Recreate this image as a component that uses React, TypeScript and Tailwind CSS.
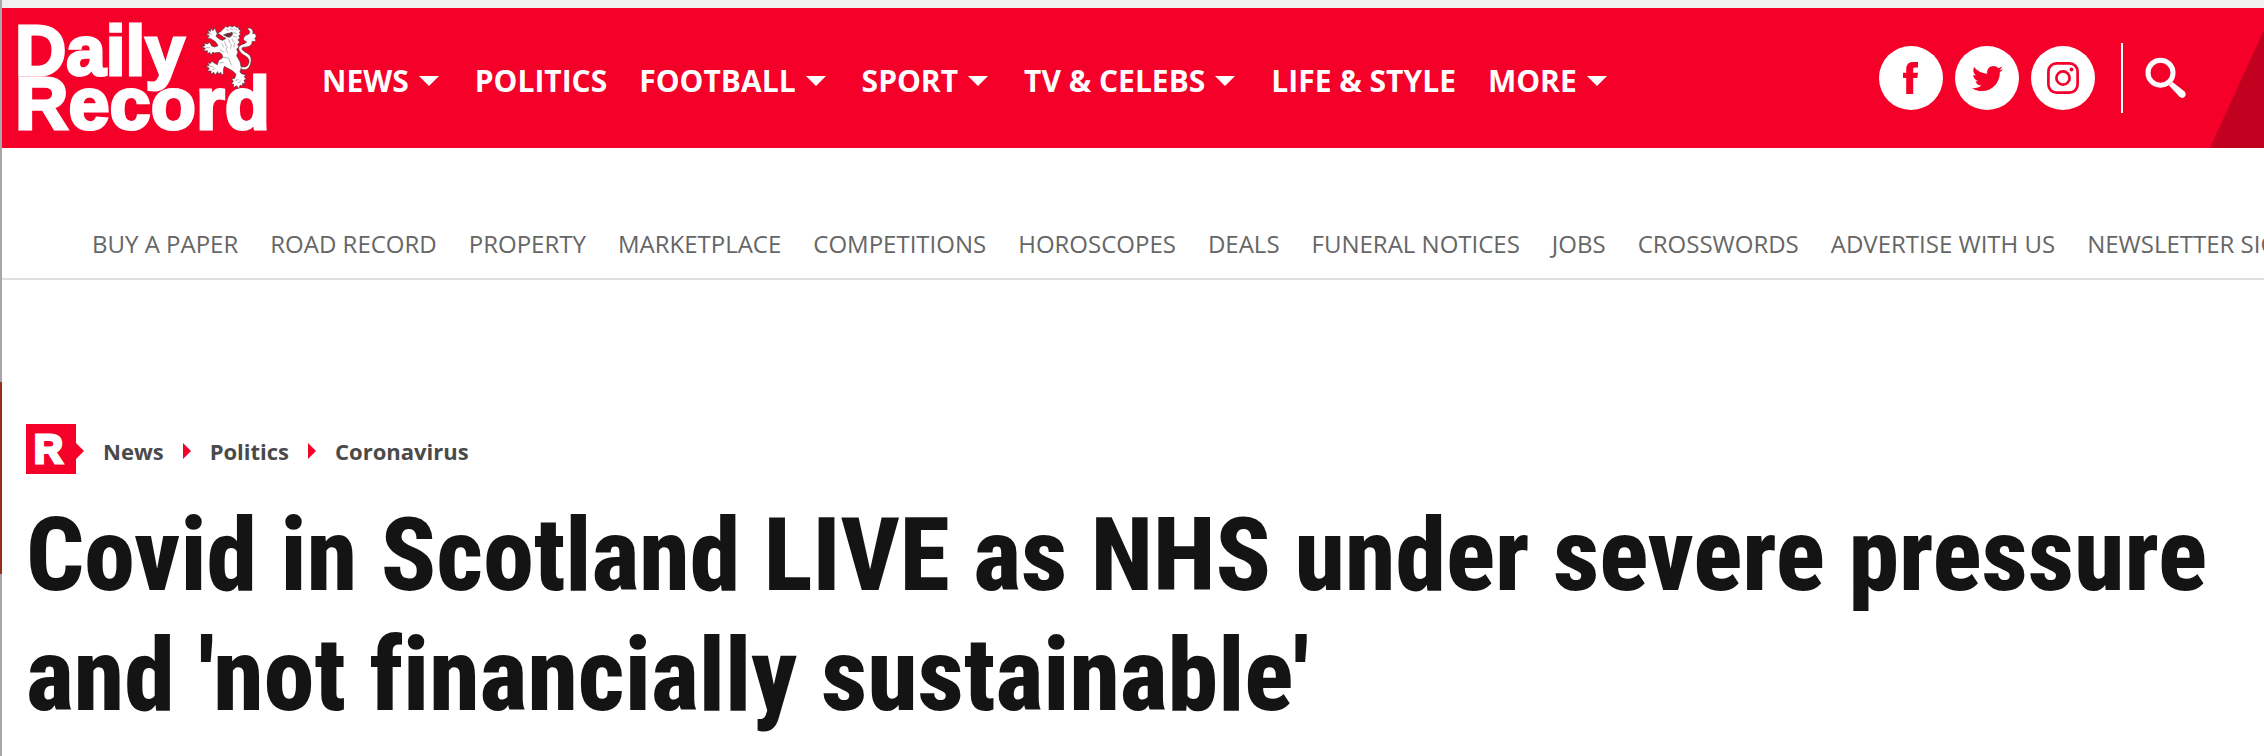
import React from "react";
import { FaTwitter } from "react-icons/fa";

const sections = [
  { label: "NEWS", menu: true },
  { label: "POLITICS", menu: false },
  { label: "FOOTBALL", menu: true },
  { label: "SPORT", menu: true },
  { label: "TV & CELEBS", menu: true },
  { label: "LIFE & STYLE", menu: false },
  { label: "MORE", menu: true },
];

const services = [
  "BUY A PAPER",
  "ROAD RECORD",
  "PROPERTY",
  "MARKETPLACE",
  "COMPETITIONS",
  "HOROSCOPES",
  "DEALS",
  "FUNERAL NOTICES",
  "JOBS",
  "CROSSWORDS",
  "ADVERTISE WITH US",
  "NEWSLETTER SIGN UP",
];

const crumbs = ["News", "Politics", "Coronavirus"];

function Lion() {
  return (
    <g
      transform="translate(178 7) scale(0.3333)"
      fill="#fff"
      stroke="#4a3a3c"
      strokeWidth="2"
      strokeLinejoin="round"
      strokeLinecap="round"
    >
      <path d="M178 150 C190 162 206 156 207 140 C208 128 196 124 188 118 C176 108 172 98 180 92 C186 86 196 88 200 80 C190 78 188 70 194 64 C200 58 210 60 209 50 C208 44 202 44 202 40 C214 36 222 46 218 56 C228 54 232 64 224 71 C232 76 224 82 216 79 C218 88 210 94 203 95 C196 98 188 94 186 100 C186 108 198 112 206 118 C218 128 214 148 206 158 C198 168 184 164 174 158 Z" />
      <path d="M122 50 C128 42 134 40 137 34 L143 37 L150 32 L156 36 L164 32 L169 37 L177 37 L176 43 L183 47 L178 52 L182 58 L176 62 L180 69 L174 74 L179 82 L173 88 L177 96 L170 102 L174 112 L170 122 L180 140 L184 158 L180 170 L184 176 L199 180 L192 185 L199 192 L192 196 L196 206 L188 205 L187 214 L181 210 L176 221 L170 212 L160 218 L161 208 L154 206 L160 199 L155 192 L164 190 L168 178 L158 168 L140 158 L133 154 L130 166 L131 176 L125 180 L122 172 L116 178 L113 170 L106 180 L101 172 L93 178 L93 168 L82 168 L88 160 L78 154 L88 151 L82 144 L92 145 L95 138 L104 145 L112 149 L116 136 L128 128 L126 118 L118 112 L104 114 L98 112 L93 121 L89 112 L82 117 L82 107 L70 108 L76 100 L65 96 L75 92 L72 84 L82 87 L90 82 L94 92 L104 96 L114 92 L108 82 L100 76 L92 71 L82 70 L88 63 L78 58 L88 55 L82 46 L92 49 L91 39 L99 47 L105 38 L108 48 L112 56 L108 64 L118 72 L128 76 L138 70 L130 66 L122 60 L112 54 Z" />
      <path d="M132 60 C140 54 148 56 156 52 C160 56 156 64 150 66 C144 68 138 64 132 60 Z" fill="#7c2530" />
      <path d="M138 42 L146 46 M150 40 L158 44 M162 40 L170 45 M160 52 L170 56 M160 64 L170 66 M156 72 L160 80 M146 74 L150 84 M134 80 L138 92 M126 86 L130 96 M142 94 L138 106 L144 114 M154 88 L152 100 M164 84 L162 96 M120 104 L132 112 M130 126 L146 130 L154 150 M120 144 L130 142 M84 56 L94 58 M78 98 L88 98 M90 154 L100 156 M98 164 L104 160 M166 196 L176 194 M174 204 L182 198" fill="none" stroke="#8b8283" strokeWidth="1.8" />
    </g>
  );
}

function Logo() {
  return (
    <svg viewBox="0 0 270 140" className="h-[140px] w-[270px] shrink-0" role="img" aria-label="Daily Record">
      <g
        fill="#fff"
        stroke="#fff"
        strokeWidth="3"
        fontFamily="'Liberation Sans', Arial, sans-serif"
        fontWeight="700"
      >
        <text x="13" y="67" fontSize="71">Daily</text>
        <text x="13" y="121" fontSize="74">Record</text>
      </g>
      <Lion />
    </svg>
  );
}

function Caret() {
  return (
    <svg viewBox="0 0 20 10" className="h-[10px] w-[20px]" fill="#fff" aria-hidden="true">
      <path d="M0 0H20L10 10Z" />
    </svg>
  );
}

function CrumbArrow() {
  return (
    <svg viewBox="0 0 8 16" className="mt-1 h-[16px] w-[8px]" fill="#f40029" aria-hidden="true">
      <path d="M0 0L8 8L0 16Z" />
    </svg>
  );
}

const round = "flex size-16 items-center justify-center rounded-full bg-white text-[#f40029]";

export default function App() {
  return (
    <div className="flex min-h-screen overflow-hidden bg-white font-['Open_Sans','Noto_Sans',sans-serif]">
      <div className="flex w-[2px] shrink-0 flex-col bg-[#a9a5ab]" aria-hidden="true">
        <div className="mt-[382px] h-[192px] bg-[#94301a]" />
      </div>
      <div className="min-w-0 grow">
        <header className="border-t-8 border-[#f0f0f0]">
          <div className="relative flex h-[140px] items-center bg-[#f40029]">
            <a href="#home">
              <Logo />
            </a>
            <nav aria-label="Sections" className="ml-[50px] flex items-center gap-8 pt-[6px] text-[30px] leading-[40px] font-bold whitespace-nowrap text-white">
              {sections.map((s) =>
                s.menu ? (
                  <button key={s.label} type="button" className="flex items-center gap-[10px] pr-1">
                    {s.label}
                    <Caret />
                  </button>
                ) : (
                  <a key={s.label} href="#section">
                    {s.label}
                  </a>
                ),
              )}
            </nav>
            <div className="relative z-10 mr-[78px] ml-auto flex items-center">
              <div className="flex gap-3">
                <a href="#facebook" aria-label="Facebook" className={round}>
                  <svg viewBox="0 0 16 32" className="h-8 w-4" fill="currentColor">
                    <path d="M3.200 32V16H0V10.700H3.200V7.500C3.200 2.500 5.500 0 10 0H15V5.500H12.200C10.500 5.500 10.200 6.200 10.200 7.700V10.700H15L14.300 16H10.200V32Z" />
                  </svg>
                </a>
                <a href="#twitter" aria-label="Twitter" className={round}>
                  <FaTwitter className="size-[31px]" />
                </a>
                <a href="#instagram" aria-label="Instagram" className={round}>
                  <svg viewBox="0 0 32 32" className="size-8" fill="none" stroke="currentColor" strokeWidth="2.700">
                    <rect x="1.400" y="1.400" width="29.200" height="29.200" rx="8" />
                    <circle cx="16" cy="16" r="6.600" />
                    <circle cx="24.500" cy="7.500" r="1.900" fill="currentColor" stroke="none" />
                  </svg>
                </a>
              </div>
              <div className="ml-[26px] h-[70px] w-[2px] bg-white" />
              <button type="button" aria-label="Search" className="ml-[22px]">
                <svg viewBox="0 0 41 42" className="h-[42px] w-[41px]" fill="#fff">
                  <circle cx="15.500" cy="15.700" r="12.500" fill="none" stroke="#fff" strokeWidth="5" />
                  <path d="M24 28.500L27.500 25L39.300 34.300C43 38 38.500 43.500 34.300 39.500Z" />
                </svg>
              </button>
            </div>
            <svg viewBox="0 0 54 118" className="absolute right-0 bottom-0 h-[118px] w-[54px]" fill="#c20020" aria-hidden="true">
              <path d="M54 0V118H0Z" />
            </svg>
          </div>
        </header>
        <nav aria-label="Services" className="overflow-hidden border-b-2 border-[#e0e0e0] pt-[80px] pb-[18px] pl-[90px]">
          <ul className="flex gap-8 text-[24px] leading-[32px] whitespace-nowrap text-[#666]">
            {services.map((s) => (
              <li key={s}>
                <a href="#service">{s}</a>
              </li>
            ))}
          </ul>
        </nav>
        <main className="px-6 pt-[144px]">
          <nav aria-label="Breadcrumb" className="flex items-center gap-[19px] text-[22px] leading-[30px] font-bold text-[#4a4a4a]">
            <a href="#home" aria-label="Home">
              <svg viewBox="0 0 58 50" className="h-[50px] w-[58px]">
                <path d="M0 0H50V19L58 27L50 35V50H0Z" fill="#f40029" />
                <text x="8" y="39" fill="#fff" stroke="#fff" strokeWidth="3" fontFamily="'Liberation Sans', Arial, sans-serif" fontWeight="700" fontSize="40">
                  R
                </text>
              </svg>
            </a>
            {crumbs.map((c, i) => (
              <React.Fragment key={c}>
                {i > 0 && <CrumbArrow />}
                <a href="#crumb" className="pt-1">{c}</a>
              </React.Fragment>
            ))}
          </nav>
          <h1 className="mt-[21px] font-['Roboto_Condensed','Roboto',sans-serif] text-[102px] leading-[120px] font-extrabold text-[#141414] [font-variant-ligatures:none]">
            Covid in Scotland LIVE as NHS under severe pressure and 'not financially sustainable'
          </h1>
        </main>
      </div>
    </div>
  );
}
